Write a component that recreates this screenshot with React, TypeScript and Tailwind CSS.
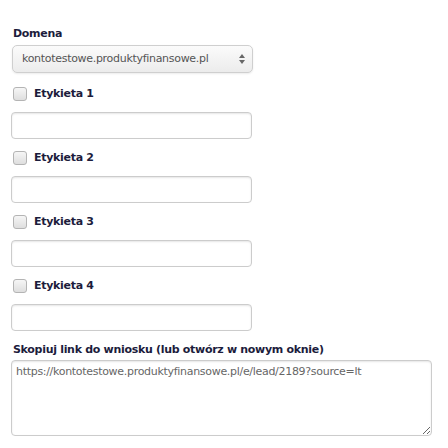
const labels = ["Etykieta 1", "Etykieta 2", "Etykieta 3", "Etykieta 4"];

const font = { fontFamily: "Verdana, 'DejaVu Sans', sans-serif" };

export default function App() {
  return (
    <div className="w-[448px] h-[448px] bg-white pt-[27px] pl-[11px] tracking-[-0.3px]" style={font}>
      <div className="text-[11px] font-bold text-[#1c1c3c] leading-[14px] pl-[2px]">Domena</div>
      <div className="mt-[4px] ml-[1px] w-[241px] h-[28px] rounded-[5px] border border-[#cfcfcf] bg-gradient-to-b from-[#fbfbfb] to-[#ececec] shadow-[0_1px_2px_rgba(0,0,0,0.08)] flex items-center justify-between pl-[9px] pr-[6px]">
        <span className="text-[11px] text-[#555]">kontotestowe.produktyfinansowe.pl</span>
        <svg width="8" height="12" viewBox="0 0 8 12">
          <path d="M4 1 L7 5 L1 5 Z" fill="#666" />
          <path d="M4 11 L7 7 L1 7 Z" fill="#666" />
        </svg>
      </div>
      {labels.map((l, i) => (
        <div key={l} className={i === 0 ? "mt-[14px]" : "mt-[12px]"}>
          <div className="flex items-center h-[14px] pl-[2px]">
            <span className="w-[14px] h-[14px] rounded-[3px] border border-[#b4b4b4] bg-gradient-to-b from-[#f6f6f6] to-[#dedede]" />
            <span className="ml-[7px] text-[11px] font-bold text-[#1c1c3c]">{l}</span>
          </div>
          <div className="mt-[11px] w-[241px] h-[27px] rounded-[4px] border border-[#cccccc] shadow-[inset_0_1px_2px_rgba(0,0,0,0.1)]" />
        </div>
      ))}
      <div className="mt-[12px] text-[11px] font-bold text-[#1c1c3c] leading-[14px] pl-[2px]">
        Skopiuj link do wniosku (lub otwórz w nowym oknie)
      </div>
      <textarea
        readOnly
        className="mt-[3px] block w-[421px] h-[76px] rounded-[4px] border border-[#cccccc] shadow-[inset_0_1px_2px_rgba(0,0,0,0.1)] px-[4px] py-[3px] text-[11px] tracking-[-0.3px] text-[#666] outline-none resize-y"
        style={font}
        defaultValue="https://kontotestowe.produktyfinansowe.pl/e/lead/2189?source=lt"
      />
    </div>
  );
}
